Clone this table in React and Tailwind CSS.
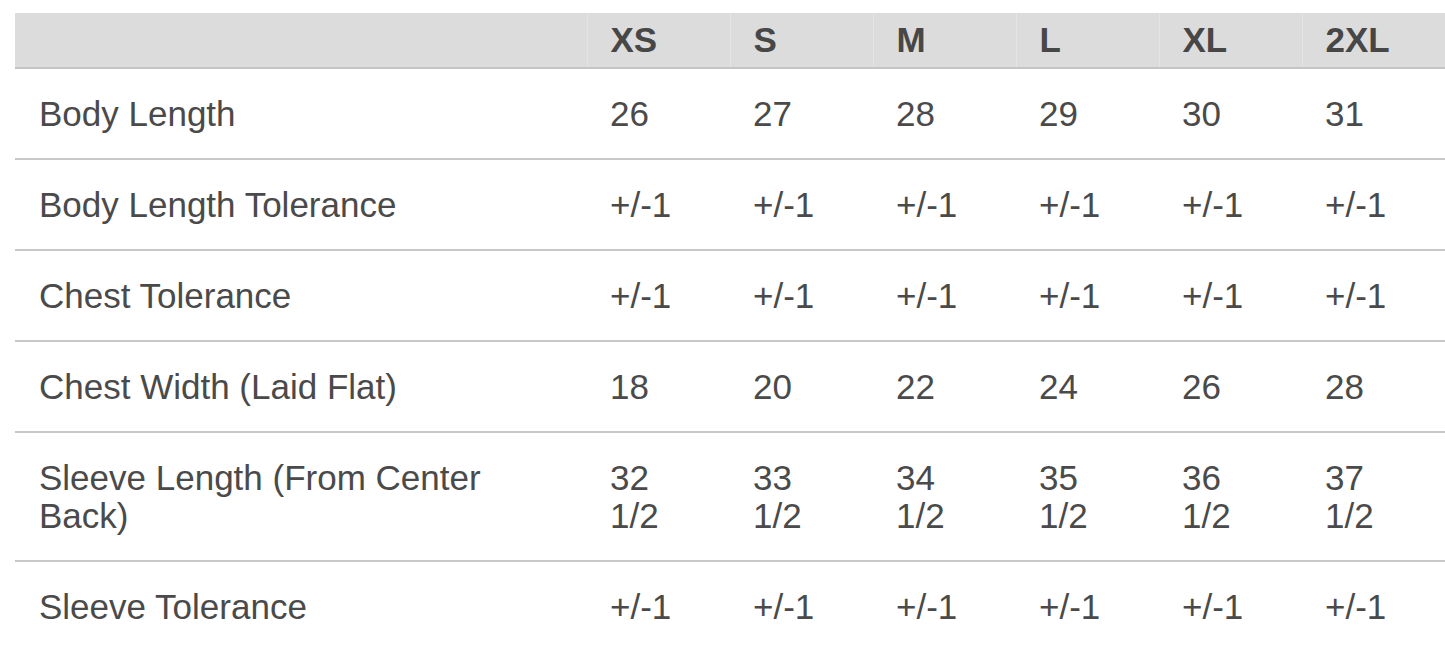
import React from "react";

const sizes = ["XS", "S", "M", "L", "XL", "2XL"];
const rows = [
  { label: ["Body Length"], values: [["26"], ["27"], ["28"], ["29"], ["30"], ["31"]] },
  { label: ["Body Length Tolerance"], values: Array(6).fill(["+/-1"]) },
  { label: ["Chest Tolerance"], values: Array(6).fill(["+/-1"]) },
  { label: ["Chest Width (Laid Flat)"], values: [["18"], ["20"], ["22"], ["24"], ["26"], ["28"]] },
  {
    label: ["Sleeve Length (From Center", "Back)"],
    values: [["32", "1/2"], ["33", "1/2"], ["34", "1/2"], ["35", "1/2"], ["36", "1/2"], ["37", "1/2"]],
  },
  { label: ["Sleeve Tolerance"], values: Array(6).fill(["+/-1"]) },
];

function Lines({ lines }) {
  return lines.map((l, i) => (
    <React.Fragment key={i}>
      {i > 0 && <br />}
      {l}
    </React.Fragment>
  ));
}

export default function App() {
  return (
    <div
      className="w-[1445px] h-[659px] overflow-hidden bg-white pt-[13px] pl-[15px]"
      style={{ fontFamily: '"Liberation Sans", Arial, Helvetica, sans-serif' }}
    >
      <table className="table-fixed border-collapse w-[1430px] text-[35px] leading-[38px] text-[#4a4a4a]">
        <colgroup>
          <col className="w-[572px]" />
          {sizes.map((s) => (
            <col key={s} className="w-[143px]" />
          ))}
        </colgroup>
        <thead>
          <tr className="bg-[#dcdcdc] border-b-2 border-[#c5c5c5]">
            <th className="pt-[8px] pb-[8px] px-[24px]"></th>
            {sizes.map((s) => (
              <th
                key={s}
                className="pt-[8px] pb-[8px] pl-[23px] pr-[10px] text-left font-bold text-[#474747] border-l border-[#e4e4e4]"
              >
                {s}
              </th>
            ))}
          </tr>
        </thead>
        <tbody>
          {rows.map((r, i) => (
            <tr key={i} className={i < rows.length - 1 ? "border-b-2 border-[#c8c8c8]" : ""}>
              <td className="pt-[26px] pb-[25px] pl-[24px] pr-[10px] align-top whitespace-nowrap">
                <Lines lines={r.label} />
              </td>
              {r.values.map((v, j) => (
                <td key={j} className="pt-[26px] pb-[25px] pl-[23px] pr-[10px] align-top whitespace-nowrap">
                  <Lines lines={v} />
                </td>
              ))}
            </tr>
          ))}
        </tbody>
      </table>
    </div>
  );
}
